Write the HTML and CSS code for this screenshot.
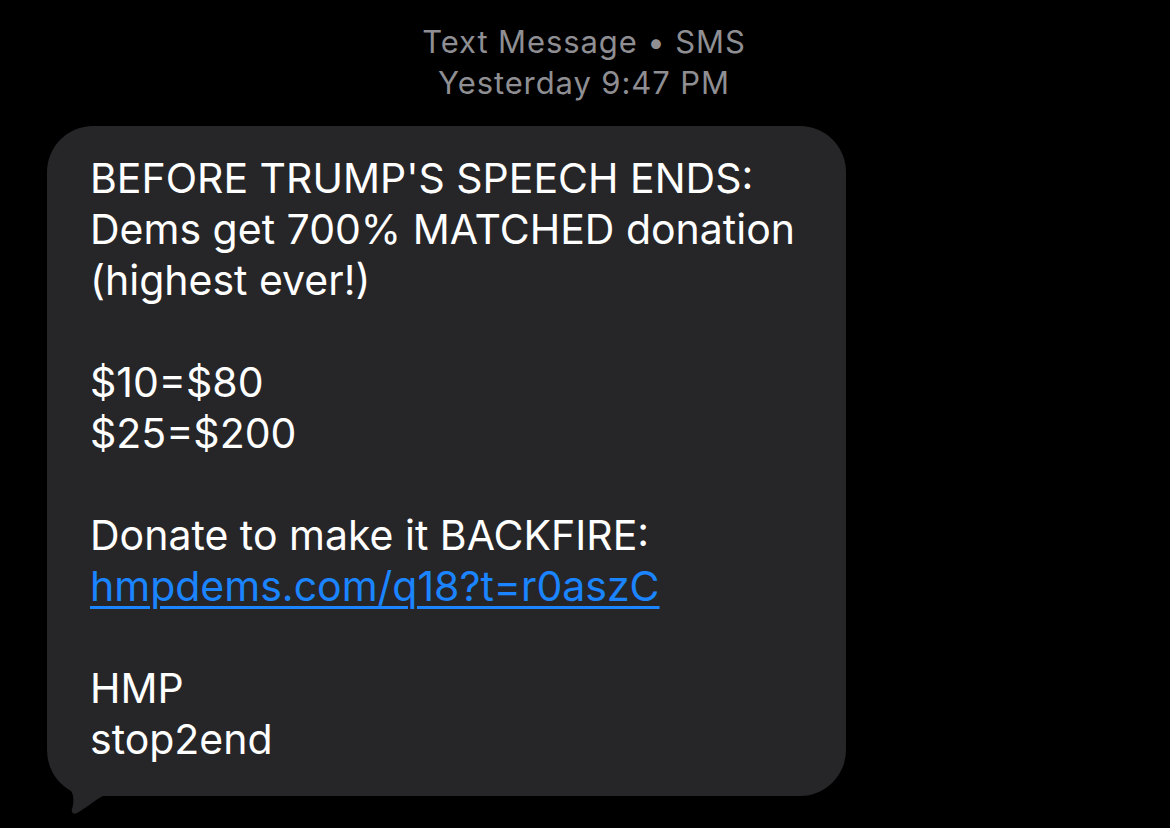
FILE: index.html
```html
<!DOCTYPE html>
<html>
<head>
<meta charset="utf-8">
<link rel="stylesheet" href="styles.css">
</head>
<body>
<div class="screen">
  <div class="header">
    <div class="header-line">Text Message • SMS</div>
    <div class="header-line">Yesterday 9:47 PM</div>
  </div>
  <div class="bubble-row">
    <div class="bubble">
      <svg class="tail" width="80" height="85" viewBox="0 0 80 85"><path d="M 1 0 L 1 18 C 3 36, 14 46, 24 52 C 27 56, 27 64, 25 70 C 24 73, 26 76, 30 74 C 38 70, 46 62, 56 57 L 80 57 L 80 0 Z" fill="#262629"/></svg>
      <div class="msg">BEFORE TRUMP'S SPEECH ENDS:<br>Dems get 700% MATCHED donation<br>(highest ever!)<br><br>$10=$80<br>$25=$200<br><br>Donate to make it BACKFIRE:<br><a class="link" href="#">hmpdems.com/q18?t=r0aszC</a><br><br>HMP<br>stop2end</div>
    </div>
  </div>
</div>
</body>
</html>
```
FILE: styles.css
```css
html, body {
  margin: 0;
  padding: 0;
  background: #000;
}
.screen {
  width: 1170px;
  height: 828px;
  background: #000;
  font-family: "Inter", "Liberation Sans", sans-serif;
  overflow: hidden;
}
.header {
  padding-top: 21px;
  text-align: center;
  color: #8e8e93;
  font-size: 31px;
  letter-spacing: 0.9px;
  line-height: 41px;
  width: 1168px;
}
.bubble-row {
  padding-left: 47px;
  padding-top: 23px;
  display: flex;
}
.bubble {
  position: relative;
  width: 799px;
  box-sizing: border-box;
  background: #262629;
  border-radius: 46px;
  padding: 27px 20px 31px 43px;
}
.msg {
  position: relative;
  color: #fff;
  font-size: 41px;
  line-height: 51px;
}
.link {
  color: #1b84ff;
  text-decoration: underline;
  text-decoration-thickness: 3px;
  text-underline-offset: 5px;
}
.tail {
  position: absolute;
  left: 0;
  bottom: -28px;
}
```
